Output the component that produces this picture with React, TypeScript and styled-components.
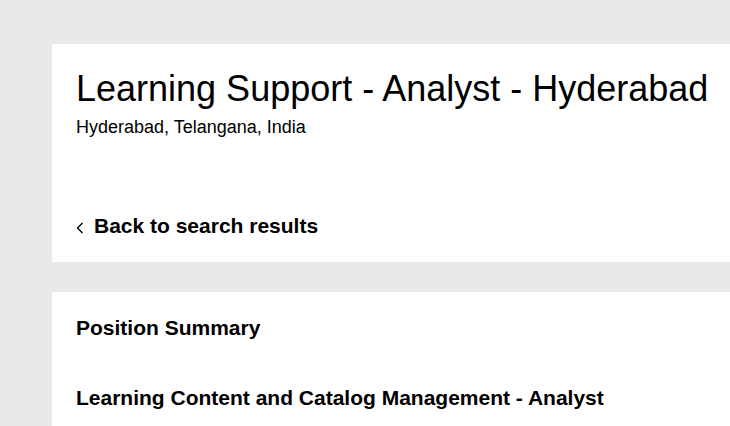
import React from "react";
import styled, { createGlobalStyle } from "styled-components";

const Global = createGlobalStyle`
  html, body { margin: 0; padding: 0; background: #e8e9e8; overflow: hidden; }
  body { font-family: Arial, "Liberation Sans", sans-serif; color: #000; }
`;

const Page = styled.div`
  padding: 44px 0 0 52px;
  display: flex;
  flex-direction: column;
  gap: 30px;
  height: 426px;
  box-sizing: border-box;
  overflow: hidden;
`;

const Card = styled.section<{ $height?: number }>`
  background: #fff;
  width: 760px;
  box-sizing: border-box;
  padding: 24px 24px 0 24px;
  ${(p) => (p.$height ? `height: ${p.$height}px;` : "")}
  flex-shrink: 0;
  display: flex;
  flex-direction: column;
`;

const Title = styled.h1`
  margin: 0;
  font-size: 36px;
  font-weight: 400;
  line-height: 42px;
  white-space: nowrap;
`;

const Location = styled.div`
  font-size: 18px;
  line-height: 22px;
  margin-top: 6px;
`;

const BackLink = styled.a`
  margin-top: 76px;
  display: flex;
  align-items: center;
  gap: 10px;
  font-size: 21px;
  font-weight: 700;
  line-height: 24px;
  color: #000;
  text-decoration: none;
`;

const Chevron = styled.svg`
  width: 8px;
  height: 12px;
  margin-top: 4px;
`;

const SectionHeading = styled.h2<{ $gap?: number }>`
  margin: ${(p) => p.$gap ?? 0}px 0 0 0;
  font-size: 21px;
  font-weight: 700;
  line-height: 24px;
  white-space: nowrap;
`;

export default function App() {
  return (
    <>
      <Global />
      <Page>
        <Card $height={218}>
          <Title>Learning Support - Analyst - Hyderabad</Title>
          <Location>Hyderabad, Telangana, India</Location>
          <BackLink href="#">
            <Chevron viewBox="0 0 8 12">
              <path d="M6.5 1 L1.5 6 L6.5 11" fill="none" stroke="#000" strokeWidth="1.4" />
            </Chevron>
            Back to search results
          </BackLink>
        </Card>
        <Card $height={200}>
          <SectionHeading $gap={0}>Position Summary</SectionHeading>
          <SectionHeading $gap={46}>Learning Content and Catalog Management - Analyst</SectionHeading>
        </Card>
      </Page>
    </>
  );
}
